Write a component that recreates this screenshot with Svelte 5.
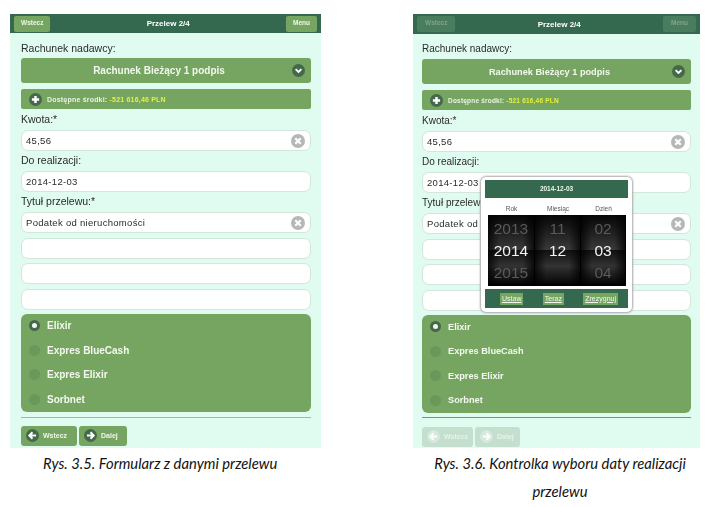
<script lang="ts">
  const options = ['Elixir', 'Expres BlueCash', 'Expres Elixir', 'Sorbnet']
  const wheel = [
    ['2013', '2014', '2015'],
    ['11', '12', ''],
    ['02', '03', '04'],
  ]
</script>

{#snippet circle(kind: string)}
  <svg class="ico" viewBox="0 0 18 18" width="15" height="15">
    <circle cx="9" cy="9" r="9" fill={kind === 'x' ? '#b5b8b6' : '#44694a'} />
    {#if kind === 'down'}
      <path d="M5 7l4 4 4-4" fill="none" stroke="#fff" stroke-width="2.6" />
    {:else if kind === 'plus'}
      <path d="M9 4v10M4 9h10" fill="none" stroke="#fff" stroke-width="3.4" />
    {:else if kind === 'x'}
      <path d="M5.5 5.5l7 7M12.5 5.5l-7 7" fill="none" stroke="#fff" stroke-width="2.8" />
    {:else if kind === 'left'}
      <path d="M9 4.5L4.5 9 9 13.5M5 9h9" fill="none" stroke="#fff" stroke-width="2.6" />
    {:else if kind === 'right'}
      <path d="M9 4.5L13.5 9 9 13.5M13 9H4" fill="none" stroke="#fff" stroke-width="2.6" />
    {/if}
  </svg>
{/snippet}

{#snippet phone(locked: boolean)}
  <div class="bar">
    <span class="hbtn" class:off={locked}>Wstecz</span>
    <b>Przelew 2/4</b>
    <span class="hbtn" class:off={locked}>Menu</span>
  </div>
  <div class="body">
    <div class="label first">Rachunek nadawcy:</div>
    <div class="select">
      <span>Rachunek Bieżący 1 podpis</span>
      {@render circle('down')}
    </div>
    <div class="funds">
      {@render circle('plus')}
      <span>Dostępne środki: <em>-521 616,46 PLN</em></span>
    </div>
    <div class="label">Kwota:*</div>
    <div class="input">45,56 {@render circle('x')}</div>
    <div class="label">Do realizacji:</div>
    <div class="input">2014-12-03</div>
    <div class="label">Tytuł przelewu:*</div>
    <div class="input">Podatek od nieruchomości {@render circle('x')}</div>
    <div class="input extra"></div>
    <div class="input extra"></div>
    <div class="input extra"></div>
    <div class="radios">
      {#each options as o, i}
        <div class="radio">
          <span class="dot" class:on={i === 0}></span>{o}
        </div>
      {/each}
    </div>
    <hr />
    <div class="nav" class:off={locked}>
      <span class="nbtn wide">{@render circle('left')}Wstecz</span>
      <span class="nbtn">{@render circle('right')}Dalej</span>
    </div>
  </div>
{/snippet}

<div class="page">
  <section class="col left">
    <div class="phone">{@render phone(false)}</div>
    <p class="caption">Rys. 3.5. Formularz z danymi przelewu</p>
  </section>

  <section class="col right">
    <div class="phone">
      {@render phone(true)}
      <div class="picker">
        <div class="ptitle">2014-12-03</div>
        <div class="pcols"><span>Rok</span><span>Miesiąc</span><span>Dzień</span></div>
        <div class="wheel">
          {#each wheel as col}
            <div class="wcol">
              {#each col as v, i}
                <span class:cur={i === 1}>{v}</span>
              {/each}
            </div>
          {/each}
        </div>
        <div class="pfoot">
          <span>Ustaw</span><span>Teraz</span><span>Zrezygnuj</span>
        </div>
      </div>
    </div>
    <p class="caption two">Rys. 3.6. Kontrolka wyboru daty realizacji<br />przelewu</p>
  </section>
</div>

<style>
  :global(body) {
    margin: 0;
    background: #fff;
  }
  .page {
    width: 712px;
    height: 507px;
    overflow: hidden;
    display: flex;
    padding: 14px 0 0 10px;
    box-sizing: border-box;
    font-family: 'Liberation Sans', Arial, sans-serif;
    color: #2b2b2b;
  }
  .col.left {
    width: 311px;
  }
  .col.right {
    width: 287px;
    margin-left: 92px;
  }
  .phone {
    position: relative;
    background: #e0fbf0;
    height: 434px;
    filter: blur(0.3px);
  }
  .bar {
    height: 19px;
    background: #35694f;
    display: flex;
    align-items: center;
    justify-content: space-between;
    padding: 0 4px;
    color: #fff;
    font-size: 8px;
  }
  .right .bar {
    height: 20px;
  }
  .hbtn {
    background: #76a562;
    font-size: 6.5px;
    font-weight: bold;
    height: 16px;
    padding: 0 7px;
    line-height: 13px;
    border-radius: 2px;
    color: #eef7e8;
  }
  .hbtn.off {
    background: #4a7c5e;
    color: #7fa48c;
    padding: 0 8px;
  }
  .body {
    padding: 0 10px 0 11px;
  }
  .right .body {
    padding: 0 9px;
  }
  .label {
    font-size: 10.5px;
    line-height: 11px;
    margin: 4px 0 5px;
  }
  .right .label {
    font-size: 10px;
  }
  .label.first {
    margin: 10px 0 4px;
  }
  .right .label.first {
    margin: 9px 0 5px;
  }
  .select {
    height: 25px;
    box-sizing: border-box;
    padding-right: 14px;
    background: #76a562;
    border-radius: 3px;
    display: flex;
    align-items: center;
    justify-content: center;
    position: relative;
    color: #f2f8ee;
    font-size: 10px;
    font-weight: bold;
  }
  .right .select {
    font-size: 9.2px;
  }
  .select .ico {
    position: absolute;
    right: 6px;
    width: 13px;
    height: 13px;
  }
  .funds {
    height: 20px;
    margin: 6px 0 5px;
    background: #76a562;
    border-radius: 2px;
    display: flex;
    align-items: center;
    gap: 5px;
    padding-left: 8px;
    color: #e8f2e2;
    font-size: 7px;
    font-weight: bold;
    letter-spacing: 0.2px;
  }
  .right .funds {
    font-size: 6.5px;
  }
  .funds .ico {
    width: 13px;
    height: 13px;
  }
  .funds em {
    font-style: normal;
    color: #e6f03c;
  }
  .input {
    height: 21px;
    box-sizing: border-box;
    background: #fff;
    border: 1px solid #d3e6dc;
    border-radius: 7px;
    display: flex;
    align-items: center;
    justify-content: space-between;
    padding: 0 5px 0 4px;
    font-size: 9.5px;
    letter-spacing: 0.3px;
  }
  .input .ico {
    width: 14px;
    height: 14px;
  }
  .input.extra {
    margin-top: 4.5px;
  }
  .radios {
    margin-top: 4px;
    height: 98px;
    background: #76a562;
    border-radius: 6px;
    color: #f4f9f0;
    font-size: 10px;
    font-weight: bold;
  }
  .right .radios {
    font-size: 9.2px;
  }
  .radio {
    height: 24.5px;
    display: flex;
    align-items: center;
    padding-left: 8px;
    gap: 7px;
  }
  .dot {
    width: 11px;
    height: 11px;
    border-radius: 50%;
    background: #6a975a;
    box-sizing: border-box;
  }
  .dot.on {
    background: #f4f9f0;
    border: 3px solid #44694a;
  }
  hr {
    border: 0;
    height: 1px;
    background: #9db8a6;
    margin: 5px 0 8px;
  }
  .right hr {
    background: #7f8f86;
    margin: 4px 0 9px;
  }
  .nav {
    display: flex;
    gap: 2px;
  }
  .nbtn {
    height: 20px;
    width: 48px;
    background: #76a562;
    border-radius: 3px;
    display: flex;
    align-items: center;
    gap: 4px;
    padding-left: 5px;
    box-sizing: border-box;
    color: #eef7e8;
    font-size: 7px;
    font-weight: bold;
  }
  .nbtn.wide {
    width: 56px;
  }
  .nbtn .ico {
    width: 13px;
    height: 13px;
  }
  .nav.off .nbtn {
    background: #c4dfce;
    color: #e6f3ea;
  }
  .right .nav .nbtn {
    width: 45px;
  }
  .right .nav .nbtn.wide {
    width: 51px;
  }
  .nav.off :global(circle) {
    fill: #d5e9dc;
  }
  .picker {
    position: absolute;
    left: 68px;
    top: 163px;
    width: 151px;
    height: 135px;
    box-sizing: border-box;
    background: #fff;
    border-radius: 5px;
    box-shadow: 0 0 2px 1px #a9a9a9;
    padding: 3px 4px;
    display: flex;
    flex-direction: column;
  }
  .ptitle {
    height: 18px;
    background: #35694f;
    color: #eef7e8;
    font-size: 6.5px;
    font-weight: bold;
    text-align: center;
    line-height: 18px;
  }
  .pcols,
  .wheel {
    display: grid;
    grid-template-columns: 47px 46px 45px;
    margin: 0 3px;
  }
  .pcols {
    height: 17px;
    align-items: center;
    text-align: center;
    font-size: 6.5px;
    color: #555;
    padding-top: 3px;
    box-sizing: border-box;
  }
  .wheel {
    height: 71px;
    background: #000;
  }
  .wcol {
    display: flex;
    flex-direction: column;
    text-align: center;
    font-size: 15.5px;
    line-height: 22px;
    padding-top: 3px;
    color: #5a5a5a;
    background:
      linear-gradient(90deg, rgba(0, 0, 0, 0.75), transparent 25%, transparent 75%, rgba(0, 0, 0, 0.75)),
      linear-gradient(#060606, #3a3a3a 49%, #111 50%, #333 72%, #000);
    border-right: 1px solid #000;
    box-sizing: border-box;
  }
  .wcol .cur {
    color: #f4f4f4;
  }
  .pfoot {
    margin-top: 3px;
    height: 19px;
    background: #35694f;
    display: flex;
    align-items: center;
    justify-content: space-between;
    padding: 0 10px 0 15px;
    font-size: 7px;
  }
  .pfoot span {
    background: #76a562;
    color: #f2f8ee;
    padding: 2px;
    text-decoration: underline;
    line-height: 8px;
  }
  .caption {
    margin: 1px 0 0 33px;
    font-family: Lato, 'Open Sans', sans-serif;
    font-style: italic;
    font-size: 14.8px;
    line-height: 28px;
    color: #111;
    white-space: nowrap;
  }
  .caption.two {
    margin-left: 20px;
    text-align: center;
    width: 254px;
  }
</style>
